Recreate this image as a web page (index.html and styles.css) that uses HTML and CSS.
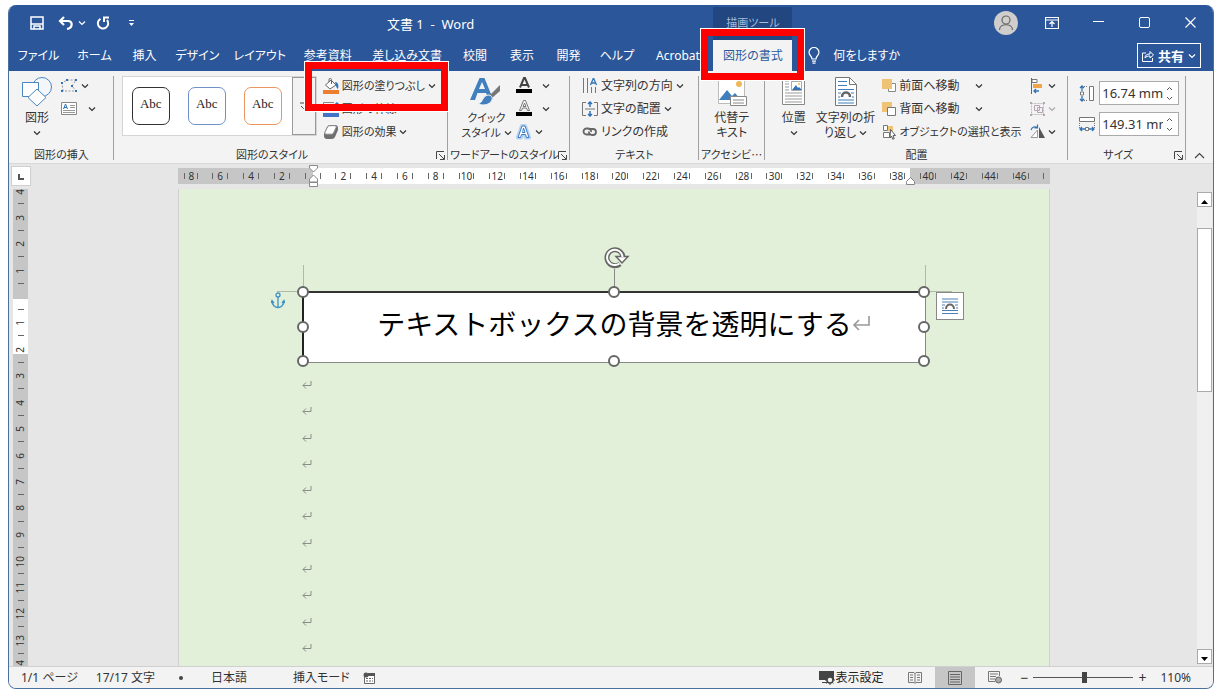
FILE: index.html
```html
<!DOCTYPE html>
<html lang="ja">
<head>
    <meta charset="UTF-8">
    <meta name="viewport" content="width=device-width, initial-scale=1.0">
    <title>文書 1 - Word</title>
    <link rel="stylesheet" href="styles.css">
</head>
<body>
    <!-- Shared symbols -->
    <svg class="symbols" aria-hidden="true">
        <symbol id="chev" viewBox="0 0 8 8"><path d="M1 2.500l3 3 3-3" fill="none" stroke="currentColor" stroke-width="1.200"/></symbol>
        <symbol id="launcher" viewBox="0 0 9 9"><path d="M.5 8V.5H8M3 3l5 5M8.500 4v4.500H4" fill="none" stroke="#444"/></symbol>
        <symbol id="mark" viewBox="0 0 10 8"><path d="M9 0v4.500H1M4 1.500l-3 3 3 3" fill="none" stroke="#8a8f86"/></symbol>
        <symbol id="wrap" viewBox="0 0 16 16"><path d="M0 1h16M0 4h16M0 12.500h16M0 15.500h16M0 7h3M13 7h3M0 10h2M14 10h2" stroke="#4a7ebb"/><path d="M4 11c0-6 8-6 8 0" fill="none" stroke="#666" stroke-width="2"/></symbol>
    </svg>

    <div class="window">
        <!-- Title bar and tabs -->
        <header class="header">
            <div class="quick">
                <button aria-label="上書き保存"><svg width="14" height="14" viewBox="0 0 14 14"><path d="M1 1h12v12H1zM1 8h12M4 13v-3h6v3" fill="none" stroke="#fff" stroke-width="1.500"/></svg></button>
                <button class="undo" aria-label="元に戻す"><svg width="16" height="14" viewBox="0 0 16 14"><path d="M6 1L2 5l4 4M2 5h8c5 0 5 7-1 8" fill="none" stroke="#fff" stroke-width="2.200"/></svg></button>
                <button aria-label="元に戻す一覧"><svg width="8" height="8"><use href="#chev"/></svg></button>
                <button class="redo" aria-label="繰り返し"><svg width="14" height="14" viewBox="0 0 14 14"><path d="M4.500 2.800A5.200 5.200 0 1 0 11 4M8 6V1.500h5" fill="none" stroke="#fff" stroke-width="2"/></svg></button>
                <button aria-label="クイックアクセスのカスタマイズ"><svg width="7" height="8" viewBox="0 0 7 8"><path d="M1 1.500h5" stroke="#fff"/><path d="M1 4h5L3.500 7z" fill="#fff"/></svg></button>
            </div>
            <div class="title">文書 1&nbsp; -&nbsp; Word</div>
            <div class="context">描画ツール</div>
            <div class="controls">
                <button aria-label="アカウント"><svg width="24" height="24" viewBox="0 0 24 24"><circle cx="12" cy="12" r="12" fill="#d0cecd"/><circle cx="12" cy="9" r="4" fill="none" stroke="#666" stroke-width="1.200"/><path d="M5.500 19c0-7 13-7 13 0" fill="none" stroke="#666" stroke-width="1.200"/></svg></button>
                <button aria-label="リボンの表示オプション"><svg width="14" height="12" viewBox="0 0 14 12"><path d="M.5.5h13v11H.5zM.5 3h13M7 10V5M4.500 7L7 4.500 9.500 7" fill="none" stroke="#fff" stroke-width="1.200"/></svg></button>
                <button aria-label="最小化"><svg width="11" height="11" viewBox="0 0 11 11"><path d="M0 4.500h11" stroke="#fff"/></svg></button>
                <button aria-label="最大化"><svg width="11" height="11" viewBox="0 0 11 11"><rect x=".5" y=".5" width="10" height="10" rx="1.500" fill="none" stroke="#fff"/></svg></button>
                <button aria-label="閉じる"><svg width="11" height="11" viewBox="0 0 11 11"><path d="M.5.5l10 10M10.500.5l-10 10" stroke="#fff" stroke-width="1.200"/></svg></button>
            </div>
            <button class="tab">ファイル</button>
            <button class="tab">ホーム</button>
            <button class="tab">挿入</button>
            <button class="tab">デザイン</button>
            <button class="tab">レイアウト</button>
            <button class="tab">参考資料</button>
            <button class="tab">差し込み文書</button>
            <button class="tab">校閲</button>
            <button class="tab">表示</button>
            <button class="tab">開発</button>
            <button class="tab">ヘルプ</button>
            <button class="tab">Acrobat</button>
            <div class="tab-holder">
                <button class="tab active">図形の書式</button>
                <div class="callout callout-tab"></div>
            </div>
            <div class="tab-end">
                <button class="tellme"><svg width="12" height="17" viewBox="0 0 12 17"><path d="M4 12c0-3-3-3.500-3-6.500a5 5 0 0 1 10 0C11 8.500 8 9 8 12zM4 14.200h4M4.500 16.200h3" fill="none" stroke="#fff" stroke-width="1.200"/></svg>何をしますか</button>
                <button class="share"><svg width="12" height="12" viewBox="0 0 12 12"><path d="M4 3H.5v8.500h10V8M3 8c0-3 2-4 5-4V1.500L11.500 5 8 8V6C6 6 4 6.500 3 8z" fill="none" stroke="#fff"/></svg>共有<svg width="8" height="8"><use href="#chev"/></svg></button>
            </div>
        </header>

        <!-- Ribbon -->
        <div class="ribbon">
            <section class="group">
                <div class="group-body insert-body">
                    <button class="big">
                        <svg width="30" height="30" viewBox="0 0 30 30"><circle cx="20" cy="10" r="9.500" fill="#f3f7fb" stroke="#4a86c0"/><path d="M.5 5.500h16v14H.5z" fill="#fff" stroke="#4a86c0"/><path d="M15 12l9 8.500-9 8.500-9-8.500z" fill="#fff" stroke="#4a86c0"/></svg>
                        <span>図形</span>
                        <svg class="below" width="8" height="8"><use href="#chev"/></svg>
                    </button>
                    <div class="rows">
                        <button class="row" aria-label="図形の編集"><svg width="17" height="15" viewBox="0 0 17 15"><path d="M2 13L1 5 6 2h9l-4 6 4 5z" fill="none" stroke="#999" stroke-dasharray="2 1.500"/><path d="M0 12h2v2H0zM0 4h2v2H0zM5 1h2v2H5zM14 1h2v2h-2zM14 12h2v2h-2zM10 7h2v2h-2z" fill="#3173b5"/></svg><svg width="8" height="8"><use href="#chev"/></svg></button>
                        <button class="row wide" aria-label="テキスト ボックス"><svg width="16" height="13" viewBox="0 0 16 13"><path d="M.5.5h15v12H.5z" fill="#fff" stroke="#888"/><path d="M9 3.500h5M9 5.500h5M2 8.500h12M2 10.500h12" stroke="#999"/><path d="M2.500 7l2-5 2 5M3 5.500h3" fill="none" stroke="#3173b5"/></svg><svg width="8" height="8"><use href="#chev"/></svg></button>
                    </div>
                </div>
                <div class="group-label">図形の挿入</div>
            </section>

            <section class="group">
                <div class="group-body">
                    <div class="gallery">
                        <button class="style black">Abc</button>
                        <button class="style blue">Abc</button>
                        <button class="style orange">Abc</button>
                        <button class="more" aria-label="その他"><svg width="7" height="8" viewBox="0 0 7 8"><path d="M0 1h6M1 4l2.500 2.500L6 4" fill="none" stroke="#444"/></svg></button>
                    </div>
                    <div class="rows compact">
                        <div class="row-holder">
                            <button class="row"><svg width="16" height="16" viewBox="0 0 16 16"><path d="M2.500 7L8 2l5 5-6 4z" fill="#fff" stroke="#666"/><path d="M8.500 6V1.500c0-1.500-2.500-1.500-2.500 0V4" fill="none" stroke="#666"/><path d="M12 4c3 0 4 3 3 7-2-1-2-4-3-7z" fill="#3173b5"/><path d="M0 12h16v4H0z" fill="#ed7d31"/></svg>図形の塗りつぶし<svg width="8" height="8"><use href="#chev"/></svg></button>
                            <div class="callout callout-fill"></div>
                        </div>
                        <button class="row"><svg width="16" height="16" viewBox="0 0 16 16"><path d="M11 1.500H.5V10H6" fill="none" stroke="#888"/><path d="M6 10l1-3 7-6 2 2-7 6z" fill="#3173b5"/><path d="M0 12h16v4H0z" fill="#4472c4"/></svg>図形の枠線<svg width="8" height="8"><use href="#chev"/></svg></button>
                        <button class="row"><svg width="16" height="16" viewBox="0 0 16 16"><path d="M1 10l3-7q1-2 3-2h5q3 0 3 3v2l-3 7q-1 2-3 2H4q-3 0-3-3z" fill="#707070"/><path d="M2 8l2.500-5q.7-1.300 2-1.300h5.500q2 0 1 2L10.500 9q-.7 1.200-2 1.200H3Q1 10 2 8z" fill="#fff" stroke="#888"/></svg>図形の効果<svg width="8" height="8"><use href="#chev"/></svg></button>
                    </div>
                </div>
                <div class="group-label launchable">図形のスタイル<button class="launcher" aria-label="図形の書式設定"><svg width="9" height="9"><use href="#launcher"/></svg></button></div>
            </section>

            <section class="group">
                <div class="group-body wordart-body">
                    <button class="big">
                        <svg width="32" height="30" viewBox="0 0 32 30"><path d="M0 23L9.500 1h5L23 22h-4.500L16 16H7.500L5 23zM9 12h6L12 5z" fill="#4180bd" fill-rule="evenodd"/><path d="M30 8v6l-8 7-2.500-2.500z" fill="#777"/><path d="M18 18c3 0 5 2 4 5-2 5-9 6-14 4 5-1 4-8 10-9z" fill="#4180bd" stroke="#f3f3f3"/></svg>
                        <span>クイック<br>スタイル <svg width="8" height="8"><use href="#chev"/></svg></span>
                    </button>
                    <div class="rows">
                        <button class="row art" aria-label="文字の塗りつぶし"><svg width="17" height="17" viewBox="0 0 17 17"><path d="M4 10.500L8 1h1l4 9.500M5.500 8h6" fill="none" stroke="#444" stroke-width="2"/><path d="M0 12h16v4H0z"/></svg><svg width="8" height="8"><use href="#chev"/></svg></button>
                        <button class="row art" aria-label="文字の輪郭"><svg width="17" height="17" viewBox="0 0 17 17"><path d="M3.500 10.500L7.500.5h2l4 10h-2l-1-2.500h-4l-1 2.500zM7 6.500h3L8.500 3z" fill="#fff" stroke="#777"/><path d="M0 12h16v4H0z"/></svg><svg width="8" height="8"><use href="#chev"/></svg></button>
                        <button class="row art-glow" aria-label="文字の効果"><svg width="15" height="16" viewBox="0 0 15 16"><path d="M2 13.500L6 2h3l4 11.500h-3l-1-3H6l-1 3z" fill="#fff" stroke="#b5d2f0" stroke-width="4" stroke-linejoin="round"/><path d="M2 13.500L6 2h3l4 11.500h-2.500l-1-3h-4l-1 3zM6.500 8.500h2.500L7.500 4z" fill="#fff" stroke="#3f7fc4"/></svg><svg width="8" height="8"><use href="#chev"/></svg></button>
                    </div>
                </div>
                <div class="group-label narrow">ワードアートのスタイル<button class="launcher" aria-label="文字の効果の設定"><svg width="9" height="9"><use href="#launcher"/></svg></button></div>
            </section>

            <section class="group">
                <div class="group-body text-body">
                    <div class="rows">
                        <button class="row"><svg width="16" height="16" viewBox="0 0 16 16"><path d="M1.500 0v15M5.500 0v15M9.500 9v6M13.500 9v6" stroke="#777"/><path d="M8.500 7l3-7 3 7M9.500 5h4" fill="none" stroke="#3173b5" stroke-width="1.300"/></svg>文字列の方向<svg width="8" height="8"><use href="#chev"/></svg></button>
                        <button class="row"><svg width="16" height="16" viewBox="0 0 16 16"><path d="M4 1.500H.5v13H4M12 1.500h3.500v13H12M3 8h10" fill="none" stroke="#777"/><path d="M8 6V1M6 3l2-2 2 2M8 10v5M6 13l2 2 2-2" fill="none" stroke="#3173b5" stroke-width="1.500"/></svg>文字の配置<svg width="8" height="8"><use href="#chev"/></svg></button>
                        <button class="row"><svg width="16" height="16" viewBox="0 0 16 16"><path d="M9 10.500H4.500a3 3 0 0 1 0-6H6a3 3 0 0 1 3 3.500M6.500 5h4.500a3 3 0 0 1 0 6H10a3 3 0 0 1-3-3.500" fill="none" stroke="#666" stroke-width="1.800"/></svg>リンクの作成</button>
                    </div>
                </div>
                <div class="group-label">テキスト</div>
            </section>

            <section class="group">
                <div class="group-body center">
                    <button class="big">
                        <svg width="30" height="30" viewBox="0 0 30 30"><path d="M1.500 1.500h26v25h-26z" fill="#fff" stroke="#bbb"/><circle cx="22" cy="7" r="3" fill="#efb759"/><path d="M2 23l8-10 5 6 3-3 6 7z" fill="#3f7fbe"/><path d="M13.500 19.500h16v9h-16z" fill="#fff" stroke="#888"/><path d="M16 23h11M16 26h11" stroke="#888"/></svg>
                        <span>代替テ<br>キスト</span>
                    </button>
                </div>
                <div class="group-label narrow">アクセシビ⋯</div>
            </section>

            <section class="group">
                <div class="group-body arrange-body">
                    <button class="big">
                        <svg width="24" height="30" viewBox="0 0 24 30"><path d="M.5.5h22v27H.5z" fill="#fff" stroke="#888"/><path d="M3 4h4M3 7h4M3 10h4M3 13h4M3 16h17M3 19h17M3 22h17M3 25h17" stroke="#999"/><path d="M9.500 4.500h10v9h-10z" fill="#fff" stroke="#aaa"/><path d="M10 13l4-5 2 3 1-1 3 3z" fill="#3173b5"/><circle cx="17" cy="7" r="1" fill="#efb759"/></svg>
                        <span>位置</span>
                        <svg class="below" width="8" height="8"><use href="#chev"/></svg>
                    </button>
                    <button class="big">
                        <svg width="24" height="30" viewBox="0 0 24 30"><path d="M1.500.5h14l7 7v21h-21z" fill="#fff" stroke="#777"/><path d="M15.500.5v7h7" fill="none" stroke="#777"/><path d="M4 4.500h9M4 8.500h9M4 12.500h16M4 16h3M17 16h3M4 20h2M18 20h2M4 23h16M4 26h16" stroke="#3f7fbe"/><path d="M8 20c0-6 8-6 8 0" fill="none" stroke="#666" stroke-width="2.500"/></svg>
                        <span>文字列の折<br>り返し <svg width="8" height="8"><use href="#chev"/></svg></span>
                    </button>
                    <div class="rows order">
                        <button class="row"><svg width="14" height="16" viewBox="0 0 14 16"><path d="M6.500 5.500h7v8h-7z" fill="#fff" stroke="#888"/><path d="M0 1h10v10H0z" fill="#eec373"/></svg>前面へ移動<svg width="8" height="8"><use href="#chev"/></svg></button>
                        <button class="row"><svg width="14" height="16" viewBox="0 0 14 16"><path d="M0 1h10v10H0z" fill="#eec373"/><path d="M5.500 6.500h8v8h-8z" fill="#fff" stroke="#777"/></svg>背面へ移動<svg width="8" height="8"><use href="#chev"/></svg></button>
                        <button class="row small"><svg width="14" height="16" viewBox="0 0 14 16"><path d="M1.500 1.500h4v5h-4zM1.500 8.500h6v5h-6z" fill="#fff" stroke="#777"/><path d="M6 2h5v5H6z" fill="#eec373"/><path d="M8.500 5.500l5 6-2.500.2 1.200 3-1.500.5-1.200-3-1.500 1.800z" fill="#fff" stroke="#555"/></svg>オブジェクトの選択と表示</button>
                    </div>
                    <div class="rows">
                        <button class="row" aria-label="配置"><svg width="15" height="16" viewBox="0 0 15 16"><path d="M1.500 0v16" stroke="#666"/><path d="M2 1.500h5v3H2z" fill="#fff" stroke="#777"/><path d="M3 6h9v4H3z" fill="#efa44a"/><path d="M9 13H4M6 11l-2 2 2 2" fill="none" stroke="#3173b5" stroke-width="1.300"/></svg><svg width="8" height="8"><use href="#chev"/></svg></button>
                        <button class="row disabled" aria-label="グループ化" disabled><svg width="15" height="16" viewBox="0 0 15 16"><path d="M1.500 2.500h12v11h-12z" fill="none" stroke="#bbb" stroke-dasharray="2 1"/><path d="M4.500 4.500h5v5h-5zM7.500 6.500h5v5h-5z" fill="none" stroke="#b5a5b5"/><path d="M0 1h2v2H0zM13 1h2v2h-2zM0 13h2v2H0zM13 13h2v2h-2z" fill="#b5a5b5"/></svg><svg width="8" height="8"><use href="#chev"/></svg></button>
                        <button class="row" aria-label="回転"><svg width="15" height="16" viewBox="0 0 15 16"><path d="M7.500 13.500V6L1 13.500z" fill="#fff" stroke="#999"/><path d="M9 14V3l6 11z" fill="#555"/><path d="M1 6c1-3 4-4 6-2.500M7.500.5V4H4.500" fill="none" stroke="#3173b5" stroke-width="1.200"/></svg><svg width="8" height="8"><use href="#chev"/></svg></button>
                    </div>
                </div>
                <div class="group-label">配置</div>
            </section>

            <section class="group">
                <div class="group-body size-body">
                    <label class="size">
                        <svg width="16" height="17" viewBox="0 0 16 17"><path d="M10.500 1.500h4v14h-4z" fill="#fff" stroke="#777"/><path d="M3 1.500h6M3 15.500h6" stroke="#777" stroke-dasharray="1 1"/><path d="M3 6V1M1 3l2-2 2 2M3 11v5M1 14l2 2 2-2" fill="none" stroke="#3173b5" stroke-width="1.300"/><path d="M1.500 7h3v3h-3z" fill="#fff" stroke="#777"/></svg>
                        <span class="spin"><input type="text" value="16.74 mm" aria-label="高さ"><svg width="9" height="17" viewBox="0 0 9 17"><path d="M2 5l2.500-2.500L7 5M2 12l2.500 2.500L7 12" fill="none" stroke="#555"/></svg></span>
                    </label>
                    <label class="size">
                        <svg width="16" height="17" viewBox="0 0 16 17"><path d="M.5 1.500h15v4H.5z" fill="#fff" stroke="#777"/><path d="M.5 7v6M15.500 7v6" stroke="#777" stroke-dasharray="1 1"/><path d="M6 13H1M3 11l-2 2 2 2M10 13h5M13 11l2 2-2 2" fill="none" stroke="#3173b5" stroke-width="1.300"/><path d="M6.500 11.500h3v3h-3z" fill="#fff" stroke="#777"/></svg>
                        <span class="spin"><input type="text" value="149.31 mm" aria-label="幅"><svg width="9" height="17" viewBox="0 0 9 17"><path d="M2 5l2.500-2.500L7 5M2 12l2.500 2.500L7 12" fill="none" stroke="#555"/></svg></span>
                    </label>
                </div>
                <div class="group-label launchable">サイズ<button class="launcher" aria-label="レイアウトの詳細"><svg width="9" height="9"><use href="#launcher"/></svg></button></div>
            </section>

            <button class="collapse" aria-label="リボンを折りたたむ"><svg width="11" height="7" viewBox="0 0 11 7"><path d="M1 6l4.500-4.500L10 6" fill="none" stroke="#444" stroke-width="1.200"/></svg></button>
        </div>

        <!-- Document -->
        <main class="workspace">
            <button class="corner" aria-label="タブの種類"><svg width="6" height="6" viewBox="0 0 6 6"><path d="M1 0v5h5" fill="none" stroke="#555" stroke-width="2"/></svg></button>
            <div class="sheet-columns">
                <div class="hruler">
                    <span>8</span><span>6</span><span>4</span><span>2</span><span></span><span>2</span><span>4</span><span>6</span><span>8</span><span>10</span><span>12</span><span>14</span><span>16</span><span>18</span><span>20</span><span>22</span><span>24</span><span>26</span><span>28</span><span>30</span><span>32</span><span>34</span><span>36</span><span>38</span><span>40</span><span>42</span><span>44</span><span>46</span><span class="last"></span>
                    <svg class="indent left" width="11" height="23" viewBox="0 0 11 23"><path d="M1.500.5h8V3l-4 4-4-4zM1.500 17v-3l4-4 4 4v3zM1.500 17.500h8v4h-8z" fill="#fff" stroke="#888"/></svg>
                    <svg class="indent right" width="11" height="23" viewBox="0 0 11 23"><path d="M1.500 19.500v-3l4-4 4 4v3z" fill="#fff" stroke="#888"/></svg>
                </div>
            </div>
            <div class="vruler">
                <span>4</span><span>3</span><span>2</span><span>1</span><span></span><span>1</span><span>2</span><span>3</span><span>4</span><span>5</span><span>6</span><span>7</span><span>8</span><span>9</span><span>10</span><span>11</span><span>12</span><span>13</span><span>14</span>
            </div>
            <div class="sheet-columns">
                <article class="page">
                    <div class="textbox">
                        <i class="crop tl"></i><i class="crop tr"></i>
                        <p class="headline">テキストボックスの背景を透明にする<svg class="headline-mark" width="20" height="16" viewBox="0 0 10 8"><path d="M8.500 0v4.500H1M3.500 2L1 4.500 3.500 7" fill="none" stroke="#999" stroke-width=".8"/></svg></p>
                        <i class="stem"></i>
                        <svg class="rotate" width="28" height="22" viewBox="0 0 28 22"><path d="M20 11a8 8 0 1 0-3 6" fill="none" stroke="#666" stroke-width="5"/><path d="M13 9.500h12L19 16z" fill="#fff" stroke="#666" stroke-width="1.500"/><path d="M19.500 10a7.700 7.700 0 1 0-3 6.500" fill="none" stroke="#fff" stroke-width="2"/></svg>
                        <i class="handle n w"></i><i class="handle n c"></i><i class="handle n e"></i>
                        <i class="handle m w"></i><i class="handle m e"></i>
                        <i class="handle s w"></i><i class="handle s c"></i><i class="handle s e"></i>
                        <svg class="anchor" width="14" height="17" viewBox="0 0 14 17"><circle cx="7" cy="3" r="2" fill="none" stroke="#3d94c4" stroke-width="1.300"/><path d="M7 5v11M1 9c0 4 3 6.500 6 6.500S13 13 13 9M0 11l1-2.500L3 11M11 11l2-2.500 1 2.500" fill="none" stroke="#3d94c4" stroke-width="1.300"/></svg>
                        <button class="layout" aria-label="レイアウト オプション"><svg width="16" height="16"><use href="#wrap"/></svg></button>
                    </div>
                    <div class="marks">
                        <svg><use href="#mark"/></svg>
                        <svg><use href="#mark"/></svg>
                        <svg><use href="#mark"/></svg>
                        <svg><use href="#mark"/></svg>
                        <svg><use href="#mark"/></svg>
                        <svg><use href="#mark"/></svg>
                        <svg><use href="#mark"/></svg>
                        <svg><use href="#mark"/></svg>
                        <svg><use href="#mark"/></svg>
                        <svg><use href="#mark"/></svg>
                        <svg><use href="#mark"/></svg>
                    </div>
                </article>
            </div>
            <div class="scrollbar">
                <button aria-label="上へスクロール"><svg width="7" height="4" viewBox="0 0 7 4"><path d="M0 4l3.500-4L7 4z"/></svg></button>
                <div class="track"><div class="thumb"></div></div>
                <button aria-label="下へスクロール"><svg width="7" height="4" viewBox="0 0 7 4"><path d="M0 0l3.500 4L7 0z"/></svg></button>
            </div>
        </main>

        <!-- Status bar -->
        <footer class="status">
            <span>1/1 ページ</span>
            <span>17/17 文字</span>
            <span class="dot"></span>
            <span class="lang">日本語</span>
            <span class="mode">挿入モード</span>
            <svg width="13" height="12" viewBox="0 0 13 12"><path d="M1.500 3.500h10v8h-10z" fill="#fff" stroke="#666"/><path d="M5 1h7v3H5z" fill="#555"/><circle cx="3" cy="3" r="2.500" fill="#555"/><path d="M3 6.500h7M3 9h7" stroke="#666" stroke-dasharray="2 1"/></svg>
            <button class="display"><svg width="16" height="15" viewBox="0 0 16 15"><path d="M0 1h15v9H0zM3 12h5v1H3z" fill="#444"/><circle cx="11" cy="10" r="3" fill="#f3f3f3" stroke="#444" stroke-width="1.500"/><path d="M11 5v2M11 13v2M6 10h2M14 10h2M7.500 6.500L9 8M13 12l1.500 1.500M14.500 6.500L13 8M9 12l-1.500 1.500" stroke="#444"/></svg>表示設定</button>
            <button class="view" aria-label="閲覧モード"><svg width="14" height="12" viewBox="0 0 14 12"><path d="M.5.5H6l1 1 1-1h5.500v10H8l-1 1-1-1H.5zM7 1v10M2 3h3M2 5.500h3M2 8h3M9 3h3M9 5.500h3M9 8h3" fill="none" stroke="#777"/></svg></button>
            <button class="view on" aria-label="印刷レイアウト"><svg width="14" height="14" viewBox="0 0 14 14"><path d="M.5.5h13v13H.5zM2 3.500h10M2 6h10M2 8.500h10M2 11h10" fill="none" stroke="#666"/></svg></button>
            <button class="view" aria-label="Web レイアウト"><svg width="14" height="13" viewBox="0 0 14 13"><path d="M7 10.500H.5V.5h11V5M2 3h8M2 5.500h6M2 8h5" fill="none" stroke="#777"/><circle cx="10.500" cy="9" r="3" fill="#aaa" stroke="#666"/></svg></button>
            <button class="zoom" aria-label="縮小">−</button>
            <input class="slider" type="range" min="0" max="100" value="51" aria-label="ズーム">
            <button class="zoom" aria-label="拡大">+</button>
            <span class="percent">110%</span>
        </footer>
    </div>
</body>
</html>
```
FILE: styles.css
```css
* {
    box-sizing: border-box;
}

body {
    margin: 0;
    padding: 5px 8px 7px;
    height: 100vh;
    background-color: #fff;
    color: #333;
    font-family: "Noto Sans", "Noto Sans CJK JP", sans-serif;
    font-size: 12px;
    line-height: 16px;
    font-feature-settings: "palt";
}

button,
input {
    margin: 0;
    padding: 0;
    border: 0;
    background: none;
    color: inherit;
    font: inherit;
    font-feature-settings: inherit;
    white-space: nowrap;
}

svg {
    flex: none;
}

.symbols {
    position: absolute;
    width: 0;
    height: 0;
}

.window {
    display: flex;
    flex-direction: column;
    height: 100%;
    border: 1px solid #4a709f;
    border-top: 0;
    border-radius: 8px;
    overflow: hidden;
    background-color: #e6e6e6;
}

/* Title bar and tabs share one set of columns */
.header {
    display: grid;
    grid-template-columns: 59fr 53fr 47fr 59fr 66fr 70fr 89fr 47fr 47fr 46fr 51fr 71fr 79fr 421fr;
    grid-template-rows: 35px 31px;
    background-color: #2b579a;
    color: #fff;
    flex: none;
}

.header > * {
    min-width: 0;
}

.quick {
    grid-column: 1 / 6;
    display: flex;
    align-items: center;
    padding-left: 21px;
}

.quick button,
.controls button {
    display: flex;
    align-items: center;
    justify-content: center;
}

.quick .undo {
    margin-left: 14px;
    margin-right: 4px;
}

.quick .redo {
    margin-left: 10px;
    margin-right: 18px;
}

.title {
    grid-column: 7 / 9;
    align-self: center;
    padding-top: 2px;
    font-size: 13px;
    text-align: center;
    white-space: nowrap;
}

.context {
    grid-column: 13;
    margin-top: 2px;
    padding-top: 8px;
    background-color: #214680;
    color: #a8bad6;
    font-size: 11px;
    text-align: center;
    white-space: nowrap;
}

.controls {
    grid-column: 14;
    display: flex;
    justify-content: flex-end;
}

.controls button {
    width: 46px;
}

.tab {
    width: 100%;
    height: 31px;
    text-align: center;
}

.tab-holder {
    position: relative;
}

.tab.active {
    background-color: #f3f3f3;
    color: #2b579a;
}

.callout {
    position: absolute;
    border: 7px solid #f00;
    outline: 1px solid #fff;
    pointer-events: none;
    z-index: 5;
}

.callout-tab {
    top: -11px;
    bottom: -9px;
    left: -12px;
    right: -12px;
}

.tab-end {
    display: flex;
    align-items: center;
    justify-content: space-between;
    padding: 0 12px 0 16px;
}

.tellme {
    display: flex;
    align-items: center;
    gap: 13px;
}

.share {
    display: flex;
    align-items: center;
    gap: 4px;
    height: 25px;
    padding: 0 4px;
    border: 1px solid #fff;
    font-size: 13px;
    font-weight: bold;
}

/* Ribbon */
.ribbon {
    display: grid;
    grid-template-columns: 105fr 335fr 122fr 129fr 66fr 304fr 118fr 27fr;
    padding-top: 3px;
    background-color: #f3f3f3;
    border-bottom: 1px solid #d8d8d8;
    flex: none;
}

.group {
    position: relative;
    display: flex;
    flex-direction: column;
    min-width: 0;
}

.group::after {
    content: "";
    position: absolute;
    top: 2px;
    bottom: 3px;
    right: 0;
    width: 1px;
    background-color: #a0a0a0;
}

.group-body {
    display: flex;
    height: 69px;
}

.group-label {
    position: relative;
    margin-top: 4px;
    font-size: 11px;
    text-align: center;
    white-space: nowrap;
}

.group-label.launchable {
    padding-right: 18px;
}

.group-label.narrow {
    padding-left: 2px;
    text-align: left;
}

.launcher {
    position: absolute;
    right: 3px;
    top: 4px;
    line-height: 0;
}

.rows {
    display: flex;
    flex-direction: column;
}

.row-holder {
    position: relative;
}

.row {
    display: flex;
    align-items: center;
    gap: 3px;
    height: 23px;
}

.compact,
.small {
    font-size: 11px;
}

.big {
    display: flex;
    flex-direction: column;
    align-items: center;
    padding-top: 3px;
    line-height: 15px;
}

.big span {
    margin-top: 3px;
}

.big .below {
    margin-top: 4px;
}

.insert-body {
    gap: 9px;
    padding-left: 13px;
}

.wide {
    gap: 11px;
}

.gallery {
    display: flex;
    align-items: center;
    gap: 18px;
    height: 60px;
    margin: 2px 6px 0 8px;
    padding-left: 9px;
    background-color: #fff;
    border: 1px solid #d5d5d5;
}

.style {
    width: 38px;
    height: 38px;
    padding-bottom: 4px;
    border: 1px solid #333;
    border-radius: 7px;
    color: #222;
    font-family: "Liberation Serif", serif;
    font-size: 13px;
}

.style.blue {
    border-color: #7090c8;
}

.style.orange {
    border-color: #eb9660;
}

.more {
    align-self: stretch;
    width: 24px;
    margin-left: -8px;
    background-color: #f3f3f3;
    border: 1px solid #999;
}

.callout-fill {
    top: -12px;
    bottom: -14px;
    left: -18px;
    right: -12px;
}

.wordart-body {
    gap: 4px;
    padding-left: 13px;
    font-size: 11px;
}

.art {
    gap: 9px;
}

.art-glow {
    gap: 4px;
}

.text-body {
    padding-left: 12px;
}

.center {
    justify-content: center;
}

.arrange-body {
    gap: 10px;
    padding-left: 17px;
}

.arrange-body .order {
    width: 138px;
    margin-left: -3px;
}

.order .row svg:last-child:not(:first-child) {
    margin-left: 12px;
}

.disabled {
    color: #aaa;
}

.size-body {
    flex-direction: column;
    gap: 7px;
    padding: 7px 7px 0 11px;
}

.size {
    display: flex;
    align-items: center;
    gap: 4px;
}

.spin {
    display: flex;
    align-items: center;
    flex: 1;
    min-width: 0;
    height: 24px;
    padding: 0 4px 0 2px;
    background-color: #fff;
    border: 1px solid #aaa;
}

.spin input {
    flex: 1;
    width: 0;
    margin-right: 2px;
    font-size: 13px;
}

.collapse {
    align-self: end;
    padding-bottom: 4px;
    line-height: 0;
}

/* Workspace */
.workspace {
    display: grid;
    grid-template-columns: 20px 1fr 16px;
    grid-template-rows: 25px 1fr;
    flex: 1;
    min-height: 0;
}

.corner {
    width: 20px;
    height: 20px;
    margin: 2px;
    background-color: #fff;
    border: 1px solid #d0d0d0;
}

.sheet-columns {
    display: grid;
    grid-template-columns: 149fr 872fr 147fr;
    min-height: 0;
}

.hruler,
.page {
    grid-column: 2;
}

.hruler {
    position: relative;
    display: grid;
    grid-template-columns: 27fr repeat(27, 31fr) 14fr;
    height: 16px;
    margin-top: 4px;
    background: linear-gradient(to right, #c6c6c6 15.5%, #fff 15.5%, #fff 84%, #c6c6c6 84%);
    font-size: 10px;
    text-align: center;
}

.hruler span {
    min-width: 0;
    background-image: linear-gradient(#666, #666), linear-gradient(#666, #666);
    background-size: 1px 6px;
    background-position: 25% center, 75% center;
    background-repeat: no-repeat;
}

.hruler .last {
    background-position: center, center;
}

.indent {
    position: absolute;
    top: -3px;
    margin-left: -5px;
}

.indent.left {
    left: 15.5%;
}

.indent.right {
    left: 84%;
}

.vruler {
    display: grid;
    grid-template-rows: 15fr repeat(17, 26fr) 12fr;
    min-height: 0;
    margin: 0 1px 0 4px;
    background: linear-gradient(#c6c6c6 23%, #fff 23%, #fff 34.5%, #c6c6c6 34.5%);
    font-size: 10px;
    overflow: hidden;
}

.vruler span {
    display: flex;
    align-items: center;
    justify-content: center;
    min-height: 0;
    writing-mode: sideways-lr;
    line-height: 15px;
    background: linear-gradient(#666, #666) center bottom / 6px 1px no-repeat;
    overflow: hidden;
}

.vruler span:first-child {
    justify-content: flex-end;
}

.vruler span:last-child {
    justify-content: flex-end;
    padding-top: 6px;
    background: none;
}

.page {
    display: flex;
    flex-direction: column;
    min-height: 0;
    padding: 102px 14% 5px;
    background-color: #e2efd9;
    border: solid #d0d0d0;
    border-width: 0 1px;
}

.textbox {
    position: relative;
    flex: none;
    height: 72px;
    margin: 0 1px;
    background-color: #fff;
    border: 1px solid #888;
    border-top: 2px solid #333;
    border-left: 2px solid #222;
}

.headline {
    position: relative;
    width: fit-content;
    margin: 11px auto 0;
    color: #000;
    font-size: 28px;
    line-height: 40px;
    font-feature-settings: normal;
    white-space: nowrap;
}

.headline-mark {
    position: absolute;
    left: 100%;
    top: 12px;
}

.handle {
    position: absolute;
    width: 12px;
    height: 12px;
    margin: -7px;
    background-color: #fff;
    border: 2px solid #666;
    border-radius: 50%;
}

.handle.n {
    top: 0;
}

.handle.m {
    top: 50%;
}

.handle.s {
    top: 100%;
}

.handle.w {
    left: 0;
}

.handle.c {
    left: 50%;
}

.handle.e {
    left: 100%;
}

.stem {
    position: absolute;
    left: 50%;
    bottom: 100%;
    width: 1px;
    height: 24px;
    margin-left: -1px;
    background-color: #888;
}

.rotate {
    position: absolute;
    left: 50%;
    top: -46px;
    margin-left: -12px;
}

.crop {
    position: absolute;
    top: -28px;
    width: 27px;
    height: 27px;
    border-bottom: 1px solid #b0b8aa;
}

.crop.tl {
    right: 100%;
    border-right: 1px solid #b0b8aa;
}

.crop.tr {
    left: 100%;
    border-left: 1px solid #b0b8aa;
}

.anchor {
    position: absolute;
    left: -33px;
    top: -1px;
}

.layout {
    position: absolute;
    left: 100%;
    top: -1px;
    width: 28px;
    height: 28px;
    margin-left: 11px;
    background-color: #fff;
    border: 1px solid #888;
    line-height: 0;
}

.marks {
    display: flex;
    flex-direction: column;
    flex: 1;
    justify-content: space-around;
    min-height: 0;
    padding-top: 9px;
}

.marks svg {
    width: 10px;
    height: 8px;
    margin-left: 1px;
}

.scrollbar {
    grid-column: 3;
    grid-row: 1 / 3;
    display: flex;
    flex-direction: column;
    padding: 28px 1px 2px 0;
}

.scrollbar button {
    height: 15px;
    background-color: #fff;
    border: 1px solid #aaa;
    line-height: 8px;
}

.track {
    flex: 1;
    padding-top: 21px;
    background-color: #f0f0f0;
}

.thumb {
    height: 39%;
    background-color: #fff;
    border: 1px solid #aaa;
}

/* Status bar */
.status {
    display: flex;
    align-items: center;
    height: 22px;
    padding: 0 20px 0 12px;
    background-color: #f3f3f3;
    border-top: 1px solid #d0d0d0;
    flex: none;
    white-space: nowrap;
}

.status > span {
    margin-right: 18px;
}

.status .dot {
    width: 4px;
    height: 4px;
    margin: 0 28px 0 6px;
    background-color: #444;
    border-radius: 50%;
}

.status .lang {
    margin-right: 46px;
}

.status .mode {
    margin-right: 13px;
}

.status .display {
    display: flex;
    align-items: center;
    margin: 0 12px 0 auto;
    color: #222;
}

.view {
    width: 40px;
    height: 21px;
    line-height: 0;
}

.view.on {
    background-color: #c6c6c6;
}

.zoom {
    width: 18px;
    font-size: 14px;
}

.slider {
    width: 100px;
    height: 14px;
    margin: 0;
    appearance: none;
    background: linear-gradient(#555, #555) center / 100% 1px no-repeat;
}

.slider::-webkit-slider-thumb {
    appearance: none;
    width: 5px;
    height: 11px;
    background-color: #444;
}

.status .percent {
    margin: 0 2px 0 9px;
}
```
